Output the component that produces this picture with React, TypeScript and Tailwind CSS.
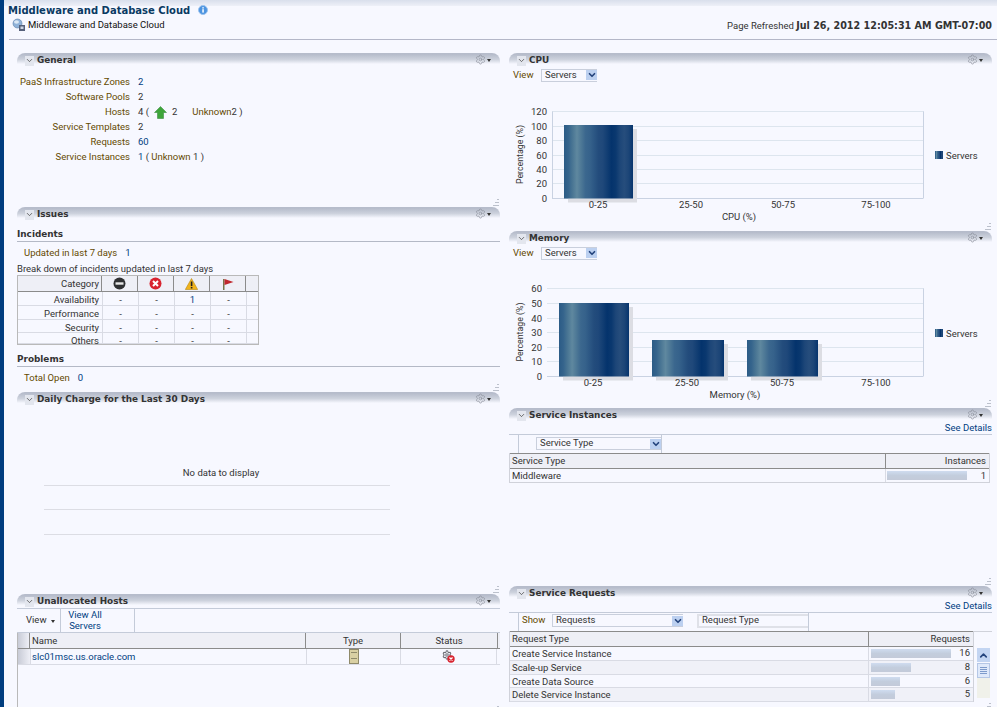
import type { ReactNode } from 'react';
import { ChevronDown, ChevronUp, Settings } from 'lucide-react';

function BarGradient({ id }: { id: string }) {
  const bands = ['#2b5b86', '#35648c', '#4a7694', '#5f889f', '#4d7896', '#3b678e', '#36628b', '#2c5784', '#234c7c', '#1f487a', '#123e73', '#04336c', '#0a386f', '#1d4678', '#264d7c', '#1c4577', '#06346d'];
  return (
    <linearGradient id={id} x1="0" x2="1" y1="0" y2="0">
      {bands.map((c, i) => (
        <stop key={i} offset={i / (bands.length - 1)} stopColor={c} />
      ))}
    </linearGradient>
  );
}

function PanelHeader({ title }: { title: string }) {
  return (
    <div className="relative h-[13px] rounded-t-[8px] bg-gradient-to-b from-[#b6bccb] from-10% via-[#cdd2dd] via-50% to-[#f7f8ff] to-85%">
      <div className="absolute left-[8px] top-[2px] flex items-center">
        <span className="flex h-[10px] w-[9px] items-center justify-center bg-[#e3e6ee]">
          <ChevronDown size={9} strokeWidth={2} className="text-[#444]" />
        </span>
        <span className="ml-[3px] font-['DejaVu_Sans',sans-serif] text-[8.9px] leading-[11px] font-bold text-[#333]">{title}</span>
      </div>
      <div className="absolute right-[9px] top-[1px] flex items-center">
        <Settings size={11} strokeWidth={1.5} className="text-[#8d929e]" />
        <span className="ml-[1px] mt-[2px] h-0 w-0 border-x-[2.5px] border-t-[3px] border-x-transparent border-t-[#333]" />
      </div>
    </div>
  );
}

function Panel({ title, height, children }: { title: string; height: number; children?: ReactNode }) {
  return (
    <section className="relative shrink-0 overflow-hidden" style={{ height }}>
      <PanelHeader title={title} />
      {children}
      <svg className="absolute bottom-[1px] right-[1px]" width="7" height="7" fill="#bcc1cc">
        <rect x="5" y="0" width="2" height="1" />
        <rect x="3" y="3" width="2" height="1" />
        <rect x="5" y="3" width="2" height="1" />
        <rect x="1" y="6" width="2" height="1" />
        <rect x="3" y="6" width="2" height="1" />
        <rect x="5" y="6" width="2" height="1" />
      </svg>
    </section>
  );
}

function SelectBox({ text, width }: { text: string; width: number }) {
  return (
    <div className="flex h-[13px] items-center justify-between border-t border-l border-b border-[#c9cfdc] pl-[3px]" style={{ width }}>
      <span>{text}</span>
      <span className="flex h-[10px] w-[11px] items-center justify-center bg-[#bcd0f0]">
        <ChevronDown size={10} strokeWidth={4} className="text-[#23437c]" />
      </span>
    </div>
  );
}

function ViewRow() {
  return (
    <div className="flex h-[18px] items-center">
      <span className="ml-[4px] w-[28px] text-[#644a00]">View</span>
      <SelectBox text="Servers" width={56} />
    </div>
  );
}

type ChartProps = {
  id: string;
  height: number;
  plotLeft: number;
  top: number;
  bottom: number;
  ticks: { y: number; label: string }[];
  bars: { x: number; w: number; y: number }[];
  labels: number[];
  title: string;
  titleX: number;
  legendY: number;
  axisY: number;
};

function Chart({ id, height, plotLeft, top, bottom, ticks, bars, labels, title, titleX, legendY, axisY }: ChartProps) {
  const names = ['0-25', '25-50', '50-75', '75-100'];
  return (
    <svg width="483" height={height} className="block" fontSize="9.5" fill="#333">
      <defs>
        <BarGradient id={id} />
      </defs>
      <line x1={plotLeft} x2="414.5" y1={top} y2={top} stroke="#c9d2e2" />
      <line x1="414.5" x2="414.5" y1={top} y2={bottom} stroke="#c9d2e2" />
      {ticks.map((t) => (
        <g key={t.label}>
          <line x1={plotLeft} x2="414" y1={t.y} y2={t.y} stroke={t.label === '0' ? '#c9d2e2' : '#dde5ee'} />
          <text x={axisY} y={t.y + 3.5} textAnchor="end">{t.label}</text>
        </g>
      ))}
      {id === 'cpu' && <line x1={plotLeft + 0.5} x2={plotLeft + 0.5} y1={top} y2={bottom} stroke="#c9d2e2" />}
      {bars.map((b) => (
        <g key={b.x}>
          <rect x={b.x + 4} y={b.y + 4} width={b.w} height={bottom - b.y} fill="#dcdde3" />
          <rect x={b.x} y={b.y} width={b.w} height={bottom - b.y} fill={`url(#${id})`} />
        </g>
      ))}
      {labels.map((x, i) => <text key={x} x={x} y={bottom + 9} textAnchor="middle">{names[i]}</text>)}
      <text x={titleX} y={bottom + 21} textAnchor="middle">{title}</text>
      <text transform={`translate(13.5 ${(top + bottom) / 2 - 0.5}) rotate(-90)`} textAnchor="middle" fontSize="8.8">Percentage (%)</text>
      <rect x="426" y={legendY - 4} width="8" height="8" fill={`url(#${id})`} />
      <text x="437" y={legendY + 3.5}>Servers</text>
    </svg>
  );
}

function NoEntry() {
  return (
    <svg width="13" height="13" viewBox="0 0 13 13">
      <circle cx="6.5" cy="6.5" r="6" fill="#2f3033" />
      <rect x="2.5" y="5.3" width="8" height="2.4" fill="#e8e8e8" />
    </svg>
  );
}

function ErrorIcon({ size = 13 }: { size?: number }) {
  return (
    <svg width={size} height={size} viewBox="0 0 13 13">
      <circle cx="6.5" cy="6.5" r="6" fill="#d8232f" />
      <path d="M4 4l5 5M9 4l-5 5" stroke="#fff" strokeWidth="2" />
    </svg>
  );
}

function WarnIcon() {
  return (
    <svg width="13" height="12" viewBox="0 0 13 12">
      <path d="M6.5 .5L12.7 11.5H.3z" fill="#f0b31c" stroke="#b98a12" strokeWidth=".6" />
      <rect x="5.8" y="3.5" width="1.6" height="4.6" fill="#222" />
      <rect x="5.8" y="9" width="1.6" height="1.5" fill="#222" />
    </svg>
  );
}

function FlagIcon() {
  return (
    <svg width="12" height="12" viewBox="0 0 12 12">
      <rect x="1" y="1" width="1.5" height="11" fill="#77764a" />
      <path d="M2.5 1L11.5 4 2.5 7z" fill="#c0272d" />
    </svg>
  );
}

function UpArrow() {
  return (
    <svg width="13" height="13" viewBox="0 0 13 13">
      <path d="M6.5 .5L12.5 6.5H9.5V12.5H3.5V6.5H.5z" fill="#3ea53a" stroke="#2b8230" strokeWidth=".5" />
    </svg>
  );
}

function InfoIcon() {
  return (
    <svg width="10" height="10" viewBox="0 0 10 10">
      <circle cx="5" cy="5" r="4.5" fill="#4d94e0" stroke="#9cc3ee" />
      <rect x="4.3" y="4.2" width="1.5" height="3.4" fill="#fff" />
      <rect x="4.3" y="2.2" width="1.5" height="1.3" fill="#fff" />
    </svg>
  );
}

function CloudIcon() {
  return (
    <svg width="14" height="14" viewBox="0 0 14 14">
      <circle cx="5.5" cy="5.5" r="4.5" fill="#8fb2d9" stroke="#5d7fa8" strokeWidth=".6" />
      <ellipse cx="4.5" cy="4" rx="2.5" ry="1.7" fill="#dbe8f5" />
      <rect x="7" y="7" width="6" height="6" fill="#55607a" />
      <rect x="8.5" y="8.5" width="3" height="2.5" fill="#cdd5e4" />
    </svg>
  );
}

function ServerIcon() {
  return (
    <svg width="10" height="15" viewBox="0 0 10 15">
      <rect x=".5" y=".5" width="9" height="14" fill="#d9d0a3" stroke="#8f8a6a" />
      <rect x="2" y="3" width="6" height="1" fill="#8f8a6a" />
      <rect x="2" y="9" width="6" height="1" fill="#8f8a6a" />
    </svg>
  );
}

function GearDown() {
  return (
    <span className="relative block h-[13px] w-[13px]">
      <Settings size={10} strokeWidth={2.5} className="text-[#6d6f76]" />
      <span className="absolute bottom-0 right-0">
        <ErrorIcon size={8} />
      </span>
    </span>
  );
}

function General() {
  const rows: { label: string; value: ReactNode }[] = [
    { label: 'PaaS Infrastructure Zones', value: <span className="text-[#003d7f]">2</span> },
    { label: 'Software Pools', value: '2' },
    {
      label: 'Hosts',
      value: (
        <span className="flex items-center">
          4 (<span className="mx-[5px]"><UpArrow /></span>2
          <span className="ml-[15px] text-[#644a00]">Unknown</span>2 )
        </span>
      ),
    },
    { label: 'Service Templates', value: '2' },
    { label: 'Requests', value: <span className="text-[#003d7f]">60</span> },
    {
      label: 'Service Instances',
      value: (
        <span>
          <span className="text-[#003d7f]">1</span> ( <span className="text-[#644a00]">Unknown</span> 1 )
        </span>
      ),
    },
  ];
  return (
    <div className="pt-[9px]">
      {rows.map((r) => (
        <div key={r.label} className="flex h-[15px] items-center">
          <span className="w-[113px] text-right text-[#644a00]">{r.label}</span>
          <span className="ml-[8px]">{r.value}</span>
        </div>
      ))}
    </div>
  );
}

function SubHeader({ text }: { text: string }) {
  return <div className="h-[15px] border-b border-[#b4b9c6] font-['DejaVu_Sans',sans-serif] text-[8.9px] leading-[15px] font-bold text-[#333]">{text}</div>;
}

function Issues() {
  const rows = [
    { name: 'Availability', h: 14, cells: ['-', '-', '1', '-'] },
    { name: 'Performance', h: 14, cells: ['-', '-', '-', '-'] },
    { name: 'Security', h: 13, cells: ['-', '-', '-', '-'] },
    { name: 'Others', h: 11, cells: ['-', '-', '-', '-'] },
  ];
  const icons = [<NoEntry key="n" />, <ErrorIcon key="e" />, <WarnIcon key="w" />, <FlagIcon key="f" />];
  return (
    <div className="pt-[7px]">
      <SubHeader text="Incidents" />
      <div className="flex h-[22px] items-center pl-[7px]">
        <span className="text-[#644a00]">Updated in last 7 days</span>
        <span className="ml-[8px] text-[#003d7f]">1</span>
      </div>
      <div className="h-[10px] leading-[10px]">Break down of incidents updated in last 7 days</div>
      <div className="mt-[1px] h-[70px] w-[242px] overflow-hidden border border-[#b9b9b9]">
        <div className="flex h-[16px] border-b border-[#8b8b8b] bg-[#eeeff6]">
          <div className="w-[84px] border-r border-[#8b8b8b] pr-[2px] text-right leading-[16px]">Category</div>
          {icons.map((icon, i) => (
            <div key={i} className="flex w-[36px] items-center justify-center border-r border-[#8b8b8b]">{icon}</div>
          ))}
        </div>
        {rows.map((r) => (
          <div key={r.name} className="flex border-b border-[#d9dbe4]" style={{ height: r.h }}>
            <div className="w-[85px] border-r border-[#d9dbe4] pr-[3px] text-right leading-[16px]">{r.name}</div>
            {r.cells.map((c, i) => (
              <div key={i} className={c === '1' ? 'w-[36px] border-r border-[#d9dbe4] text-center leading-[16px] text-[#003d7f]' : 'w-[36px] border-r border-[#d9dbe4] text-center leading-[16px]'}>{c}</div>
            ))}
          </div>
        ))}
      </div>
      <div className="mt-[7px]">
        <SubHeader text="Problems" />
      </div>
      <div className="flex h-[22px] items-center pl-[7px]">
        <span className="text-[#644a00]">Total Open</span>
        <span className="ml-[8px] text-[#003d7f]">0</span>
      </div>
    </div>
  );
}

function DailyCharge() {
  return (
    <div className="ml-[27px] flex w-[346px] flex-col pt-[62px]">
      <div className="h-[12px] pl-[8px] text-center leading-[12px]">No data to display</div>
      <div className="mt-[6px] h-[24px] border-t border-[#dcdde4]" />
      <div className="h-[25px] border-t border-[#dcdde4]" />
      <div className="h-[1px] bg-[#dcdde4]" />
    </div>
  );
}

function Unallocated() {
  return (
    <div className="h-full">
      <div className="mt-[1px] flex h-[25px] border-t border-b border-[#c4cbd9]">
        <div className="flex w-[44px] items-center border-r border-[#c4cbd9] pl-[9px]">
          View
          <span className="ml-[4px] mt-[2px] h-0 w-0 border-x-[2.5px] border-t-[3px] border-x-transparent border-t-[#333]" />
        </div>
        <div className="w-[74px] border-r border-[#c4cbd9] pl-[4px] text-center leading-[11px] text-[#003d7f]">
          <div className="w-[40px]">View All Servers</div>
        </div>
      </div>
      <div className="h-[100px] border-l border-[#b9b9b9]">
        <div className="flex h-[16px] border-b border-[#8b8b8b] bg-[#eeeff6] leading-[15px]">
          <div className="w-[12px] border-r border-[#8b8b8b] bg-gradient-to-r from-[#c8cbd6] to-[#eeeff6]" />
          <div className="w-[276px] border-r border-[#8b8b8b] pl-[2px]">Name</div>
          <div className="w-[95px] border-r border-[#8b8b8b] text-center">Type</div>
          <div className="w-[97px] border-r border-[#8b8b8b] text-center">Status</div>
        </div>
        <div className="flex h-[16px] border-b border-[#d9dbe4] leading-[15px]">
          <div className="w-[13px] border-r border-[#d9dbe4] bg-gradient-to-r from-[#c8cbd6] to-[#eeeff6]" />
          <div className="w-[276px] border-r border-[#d9dbe4] pl-[1px] text-[#003d7f]">slc01msc.us.oracle.com</div>
          <div className="flex w-[94px] items-center justify-center border-r border-[#d9dbe4]"><ServerIcon /></div>
          <div className="flex w-[96px] items-center justify-center border-r border-[#d9dbe4]"><GearDown /></div>
        </div>
      </div>
    </div>
  );
}

function ValueBar({ width }: { width: number }) {
  return <div className="h-[9px] bg-gradient-to-b from-[#cfdcf0] via-[#c3cddd] to-[#c3cad9]" style={{ width }} />;
}

function SeeDetails() {
  return <div className="h-[12px] pt-[1px] text-right leading-[12px] text-[#003d7f]">See Details</div>;
}

function ServiceInstances() {
  return (
    <div>
      <SeeDetails />
      <div className="mt-[1px] flex h-[19px] border-t border-[#c4cbd9]">
        <div className="w-[10px] border-r border-[#c4cbd9]" />
        <div className="w-[143px] border-r border-[#c4cbd9] pl-[17px] pt-[2px]">
          <SelectBox text="Service Type" width={125} />
        </div>
      </div>
      <div className="w-[481px] border-l border-r border-b border-[#d0d2da]">
        <div className="flex h-[16px] border-b border-[#8b8b8b] border-t bg-[#eeeff6] leading-[14px]">
          <div className="w-[376px] border-r border-[#8b8b8b] pl-[2px]">Service Type</div>
          <div className="flex-1 pr-[3px] text-right">Instances</div>
        </div>
        <div className="flex h-[13px] leading-[13px]">
          <div className="w-[376px] border-r border-[#d9dbe4] pl-[2px]">Middleware</div>
          <div className="flex flex-1 items-center justify-between pl-[1px] pr-[3px]">
            <ValueBar width={80} />
            <span>1</span>
          </div>
        </div>
      </div>
    </div>
  );
}

function ServiceRequests() {
  const rows = [
    { name: 'Create Service Instance', bar: 80, n: 16, h: 14 },
    { name: 'Scale-up Service', bar: 40, n: 8, h: 14 },
    { name: 'Create Data Source', bar: 29, n: 6, h: 13 },
    { name: 'Delete Service Instance', bar: 24, n: 5, h: 14 },
  ];
  return (
    <div>
      <SeeDetails />
      <div className="mt-[1px] flex h-[19px] items-center border-t border-[#c4cbd9]">
        <div className="h-full w-[10px] border-r border-[#c4cbd9]" />
        <span className="mb-[3px] ml-[3px] w-[30px] text-[#644a00]">Show</span>
        <div className="mb-[3px]">
          <SelectBox text="Requests" width={131} />
        </div>
        <div className="mb-[3px] ml-[14px] flex h-[14px] w-[111px] items-center border-t-2 border-l-2 border-b-2 border-[#dfe1e8] pl-[3px]">Request Type</div>
        <div className="h-full w-[1px] bg-[#c4cbd9]" />
      </div>
      <div className="flex">
        <div className="w-[465px] border-l border-r border-[#d0d2da]">
          <div className="flex h-[16px] border-t border-b border-[#8b8b8b] bg-[#eeeff6] leading-[14px]">
            <div className="w-[359px] border-r border-[#8b8b8b] pl-[2px]">Request Type</div>
            <div className="flex-1 pr-[3px] text-right">Requests</div>
          </div>
          {rows.map((r, i) => (
            <div key={r.name} className={i % 2 ? 'flex border-b border-[#d9dbe4] bg-[#f0f1f8]' : 'flex border-b border-[#d9dbe4]'} style={{ height: r.h }}>
              <div className="w-[359px] border-r border-[#d9dbe4] pl-[2px] leading-[13px]">{r.name}</div>
              <div className="flex flex-1 items-center justify-between pl-[2px] pr-[3px]">
                <ValueBar width={r.bar} />
                <span>{r.n}</span>
              </div>
            </div>
          ))}
        </div>
        <div className="w-[18px] border-t border-[#d0d2da] pl-[3px] pt-[16px]">
          <div className="flex h-[14px] w-[13px] items-center justify-center bg-[#c3d5f2]">
            <ChevronUp size={11} strokeWidth={3.5} className="text-[#23437c]" />
          </div>
          <div className="mt-[1px] flex h-[15px] w-[13px] flex-col items-center justify-center gap-[1px] border border-[#b5c7e6] bg-[#dfe9fa]">
            <span className="h-[1px] w-[7px] bg-[#7e9bcb]" />
            <span className="h-[1px] w-[7px] bg-[#7e9bcb]" />
            <span className="h-[1px] w-[7px] bg-[#7e9bcb]" />
            <span className="h-[1px] w-[7px] bg-[#7e9bcb]" />
          </div>
          <div className="h-[20px] w-[13px] bg-[#f0f1ea]" />
        </div>
      </div>
    </div>
  );
}

export default function App() {
  return (
    <div className="flex h-[707px] w-[997px] overflow-hidden bg-[#f7f8ff] font-['Roboto',sans-serif] text-[9.5px] text-[#333]">
      <div className="w-[4px] shrink-0 bg-[#003d7f]" />
      <main className="flex-1">
        <div className="h-[6px] bg-gradient-to-b from-[#d9dfec] to-[#eef0f8]" />
        <header className="ml-[5px] h-[34px] border-b border-[#b4b7c8]">
          <div className="flex h-[8px] items-center">
            <h1 className="-ml-[1px] font-['DejaVu_Sans',sans-serif] text-[10px] font-bold text-[#0a3a63]">Middleware and Database Cloud</h1>
            <span className="ml-[8px]"><InfoIcon /></span>
          </div>
          <div className="mt-[3px] flex items-center justify-between pr-[5px]">
            <div className="flex items-center pl-[3px] text-[#111]">
              <CloudIcon />
              <span className="ml-[2px]">Middleware and Database Cloud</span>
            </div>
            <div className="pt-[2px]">Page Refreshed <b className="font-['DejaVu_Sans',sans-serif] text-[9.6px]">Jul 26, 2012 12:05:31 AM GMT-07:00</b></div>
          </div>
        </header>
        <div className="ml-[13px] mt-[13px] flex gap-[9px]">
          <div className="flex w-[483px] flex-col">
            <Panel title="General" height={154}><General /></Panel>
            <Panel title="Issues" height={185}><Issues /></Panel>
            <Panel title="Daily Charge for the Last 30 Days" height={202}><DailyCharge /></Panel>
            <Panel title="Unallocated Hosts" height={120}><Unallocated /></Panel>
          </div>
          <div className="flex w-[483px] flex-col">
            <Panel title="CPU" height={178}>
              <ViewRow />
              <Chart
                id="cpu"
                height={147}
                plotLeft={43}
                top={27.5}
                bottom={114.5}
                ticks={[
                  { y: 27.5, label: '120' }, { y: 42.5, label: '100' }, { y: 56.5, label: '80' }, { y: 71.5, label: '60' },
                  { y: 85.5, label: '40' }, { y: 99.5, label: '20' }, { y: 114.5, label: '0' },
                ]}
                bars={[{ x: 55, w: 69, y: 41 }]}
                labels={[89, 182, 274, 367]}
                title="CPU (%)"
                titleX={230}
                legendY={71}
                axisY={38}
              />
            </Panel>
            <Panel title="Memory" height={177}>
              <ViewRow />
              <Chart
                id="mem"
                height={146}
                plotLeft={38}
                top={26.5}
                bottom={114.5}
                ticks={[
                  { y: 26.5, label: '60' }, { y: 41.5, label: '50' }, { y: 56.5, label: '40' }, { y: 70.5, label: '30' },
                  { y: 85.5, label: '20' }, { y: 99.5, label: '10' }, { y: 114.5, label: '0' },
                ]}
                bars={[{ x: 50, w: 70, y: 41 }, { x: 143, w: 72, y: 78 }, { x: 238, w: 71, y: 78 }]}
                labels={[84, 178, 273, 367]}
                title="Memory (%)"
                titleX={226}
                legendY={71}
                axisY={33}
              />
            </Panel>
            <Panel title="Service Instances" height={178}><ServiceInstances /></Panel>
            <Panel title="Service Requests" height={125}><ServiceRequests /></Panel>
          </div>
        </div>
      </main>
    </div>
  );
}
